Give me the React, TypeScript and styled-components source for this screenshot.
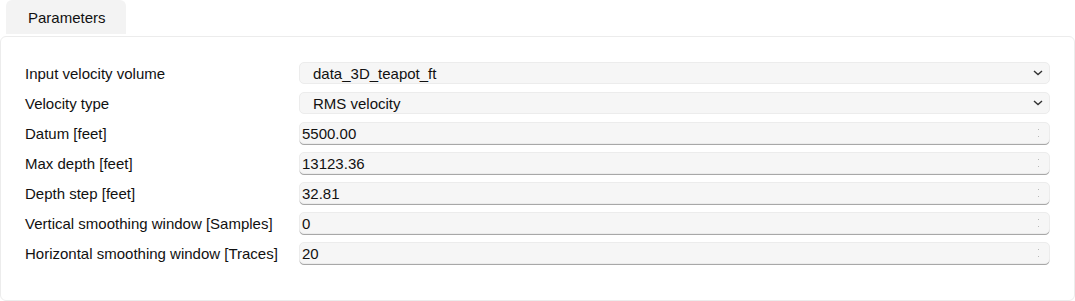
import React from 'react'
import styled, { createGlobalStyle } from 'styled-components'

const GlobalStyle = createGlobalStyle`
    html, body {
        margin: 0;
        padding: 0;
        background: #ffffff;
        font-family: 'Liberation Sans', Arial, sans-serif;
        font-size: 15px;
        color: #111;
    }
`

const selects = [
    { label: 'Input velocity volume', value: 'data_3D_teapot_ft' },
    { label: 'Velocity type', value: 'RMS velocity' },
]

const numbers = [
    { label: 'Datum [feet]', value: '5500.00' },
    { label: 'Max depth [feet]', value: '13123.36' },
    { label: 'Depth step [feet]', value: '32.81' },
    { label: 'Vertical smoothing window [Samples]', value: '0' },
    { label: 'Horizontal smoothing window [Traces]', value: '20' },
]

function Chevron() {
    return (
        <svg width="10" height="6" viewBox="0 0 10 6">
            <path d="M1 1 L5 4.6 L9 1" fill="none" stroke="#333" strokeWidth="1.4" />
        </svg>
    )
}

export default function App() {
    return (
        <Page>
            <GlobalStyle />
            <Tabs>
                <Tab>Parameters</Tab>
            </Tabs>
            <Panel>
                {selects.map((s) => (
                    <Row key={s.label}>
                        <Label>{s.label}</Label>
                        <Select>
                            <span>{s.value}</span>
                            <Chevron />
                        </Select>
                    </Row>
                ))}
                {numbers.map((n) => (
                    <Row key={n.label}>
                        <Label>{n.label}</Label>
                        <NumberBox>
                            <span>{n.value}</span>
                            <Spinner>
                                <i />
                                <i />
                            </Spinner>
                        </NumberBox>
                    </Row>
                ))}
            </Panel>
        </Page>
    )
}

const Page = styled.div`
    width: 1075px;
    height: 301px;
    display: flex;
    flex-direction: column;
`

const Tabs = styled.div`
    display: flex;
    padding-left: 6px;
    height: 34px;
    margin-bottom: 2px;
`

const Tab = styled.div`
    width: 120px;
    box-sizing: border-box;
    padding-left: 22px;
    display: flex;
    align-items: center;
    background: #f3f3f3;
    border-radius: 6px 6px 0 0;
    font-size: 15px;
    color: #111;
`

const Panel = styled.div`
    flex: 1;
    box-sizing: border-box;
    width: 1075px;
    border: 1px solid #ececec;
    border-radius: 6px;
    padding: 25px 24px 0 24px;
    display: flex;
    flex-direction: column;
    gap: 8px;
`

const Row = styled.div`
    display: grid;
    grid-template-columns: 274px 1fr;
    align-items: center;
    height: 22px;
`

const Label = styled.div`
    font-size: 15px;
    color: #111;
`

const Select = styled.div`
    height: 22px;
    box-sizing: border-box;
    background: #f6f6f6;
    border: 1px solid #ececec;
    border-radius: 5px;
    display: flex;
    align-items: center;
    justify-content: space-between;
    padding: 0 6px 0 13px;
    font-size: 15px;
`

const NumberBox = styled.div`
    height: 22px;
    box-sizing: border-box;
    background: #f6f6f6;
    border: 1px solid #ececec;
    border-radius: 5px;
    box-shadow: 0 1.5px 0.5px -0.5px #a8a8a8;
    display: flex;
    align-items: center;
    justify-content: space-between;
    padding: 0 10px 0 2px;
    font-size: 15px;
`

const Spinner = styled.div`
    display: flex;
    flex-direction: column;
    gap: 6px;
    i {
        display: block;
        width: 1px;
        height: 1px;
        background: #b8b8b8;
    }
`
